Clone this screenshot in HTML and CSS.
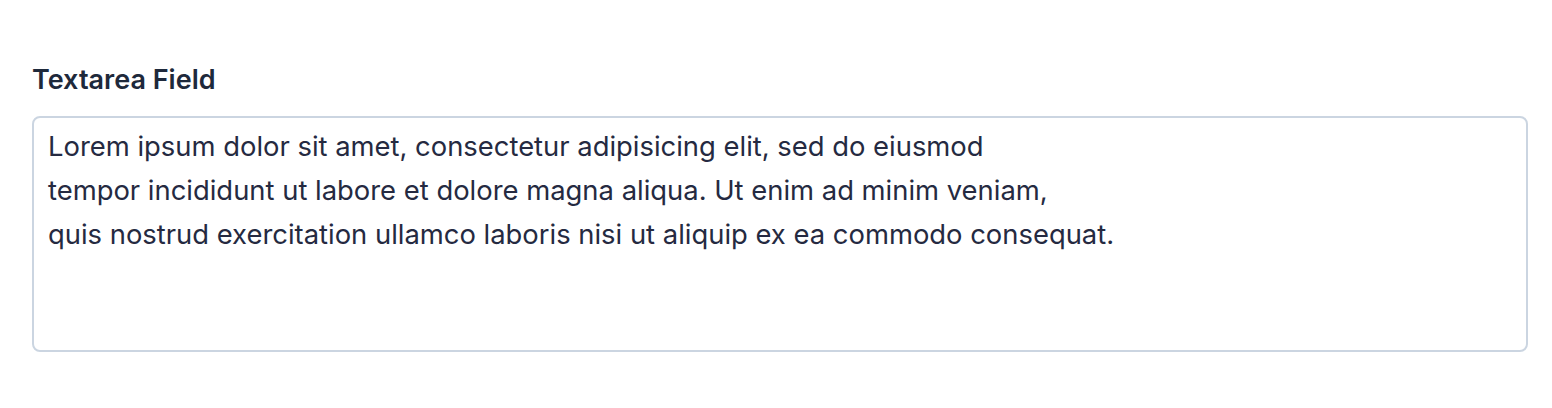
FILE: index.html
```html
<!DOCTYPE html>
<html lang="en">
<head>
    <meta charset="UTF-8">
    <meta name="viewport" content="width=device-width, initial-scale=1.0">
    <title>Textarea Field</title>
    <link rel="stylesheet" href="styles.css">
</head>
<body>
    <div class="field">
        <label for="message">Textarea Field</label>
        <textarea id="message">Lorem ipsum dolor sit amet, consectetur adipisicing elit, sed do eiusmod
tempor incididunt ut labore et dolore magna aliqua. Ut enim ad minim veniam,
quis nostrud exercitation ullamco laboris nisi ut aliquip ex ea commodo consequat.</textarea>
    </div>
</body>
</html>
```

FILE: styles.css
```css
body {
    font-family: Inter, "Noto Sans", sans-serif;
    margin: 0;
    padding: 64px 24px 0 32px;
    background-color: #fff;
}
.field {
    display: flex;
    flex-direction: column;
}
label {
    font-size: 27px;
    font-weight: 600;
    color: #1e293b;
    line-height: 32px;
    margin-bottom: 20px;
}
textarea {
    font-family: inherit;
    font-size: 27.4px;
    line-height: 44px;
    color: #252a41;
    height: 236px;
    padding: 6px 14px;
    border: 2px solid #cbd5e1;
    border-radius: 8px;
    box-sizing: border-box;
    resize: none;
    outline: none;
}
```
